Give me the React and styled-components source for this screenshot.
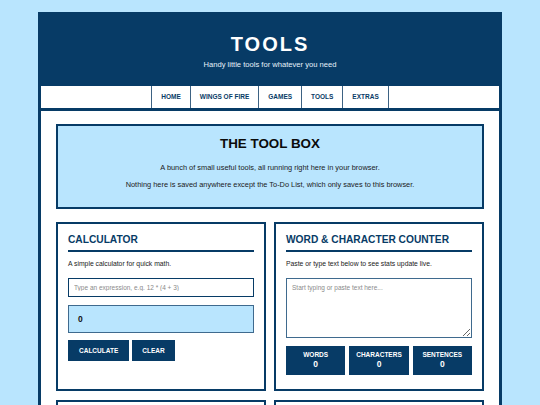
import React, { useState } from "react";
import styled, { createGlobalStyle } from "styled-components";

const navy = "#073b66";
const sky = "#b9e5fe";

const GlobalStyle = createGlobalStyle`
  * { box-sizing: border-box; }
  html, body {
    margin: 0;
    padding: 0;
    background: ${sky};
    font-family: "Liberation Sans", Arial, sans-serif;
  }
`;

const Page = styled.div`
  width: 464px;
  margin: 12px auto 0;
  border: 3px solid ${navy};
  border-bottom: none;
  background: #fff;
`;

const Header = styled.header`
  background: ${navy};
  color: #fff;
  text-align: center;
  padding: 17px 0 16px;
  h1 {
    margin: 0;
    font-size: 20px;
    line-height: 24px;
    letter-spacing: 2px;
    font-weight: 700;
  }
  p {
    margin: 4px 0 0;
    font-size: 7.6px;
    line-height: 10px;
    color: #e6f2fb;
  }
`;

const Nav = styled.nav`
  display: flex;
  justify-content: center;
  background: #fff;
  border-bottom: 3px solid ${navy};
`;

const NavItem = styled.a`
  display: block;
  padding: 0 9px;
  line-height: 22px;
  font-size: 6.5px;
  font-weight: 700;
  color: ${navy};
  text-decoration: none;
  border-left: 1px solid #3d6283;
  &:last-child {
    border-right: 1px solid #3d6283;
  }
`;

const Main = styled.main`
  padding: 13px 15px 0;
`;

const ToolBox = styled.section`
  background: ${sky};
  border: 2px solid ${navy};
  text-align: center;
  padding: 10px 10px 17px;
  margin-bottom: 13px;
  h2 {
    margin: 0 0 11px;
    font-size: 13.4px;
    line-height: 16px;
    color: #0b0b0b;
  }
  p {
    margin: 0;
    font-size: 7.4px;
    line-height: 10px;
    color: #1a1a1a;
  }
  p + p {
    margin-top: 7px;
  }
`;

const Grid = styled.div`
  display: grid;
  grid-template-columns: 1fr 1fr;
  gap: 9px 8px;
`;

const Card = styled.section`
  border: 2px solid ${navy};
  padding: 10px 10px 14px;
  background: #fff;
`;

const CardTitle = styled.h3`
  margin: 0;
  font-size: 10.2px;
  line-height: 12px;
  color: ${navy};
  padding-bottom: 4px;
  border-bottom: 2px solid ${navy};
`;

const Desc = styled.p`
  margin: 7px 0 10px;
  font-size: 6.8px;
  line-height: 9px;
  color: #1a1a1a;
`;

const Input = styled.input`
  display: block;
  width: 100%;
  height: 19px;
  border: 1.5px solid ${navy};
  padding: 0 5px;
  font-family: inherit;
  font-size: 6.5px;
  outline: none;
  &::placeholder {
    color: #8a8a8a;
  }
`;

const Result = styled.div`
  margin-top: 8px;
  height: 28px;
  background: ${sky};
  border: 1.5px solid #3f6a8e;
  padding: 0 9px;
  display: flex;
  align-items: center;
  font-size: 8.5px;
  font-weight: 700;
  color: #111;
`;

const Buttons = styled.div`
  display: flex;
  gap: 3px;
  margin-top: 7px;
`;

const Button = styled.button`
  height: 21px;
  padding: 0 ${(p) => p.$pad || 10}px;
  background: ${navy};
  color: #fff;
  border: none;
  font-family: inherit;
  font-size: 6.5px;
  font-weight: 700;
`;

const TextArea = styled.textarea`
  display: block;
  width: 100%;
  height: 60px;
  border: 1.5px solid #3f6a8e;
  padding: 5px 5px;
  font-family: inherit;
  font-size: 6.5px;
  resize: vertical;
  outline: none;
  &::placeholder {
    color: #8a8a8a;
  }
`;

const Stats = styled.div`
  display: grid;
  grid-template-columns: repeat(3, 1fr);
  gap: 4px;
  margin-top: 8px;
`;

const Stat = styled.div`
  height: 29px;
  background: ${navy};
  color: #fff;
  text-align: center;
  font-weight: 700;
  padding-top: 5px;
  span {
    display: block;
    font-size: 6.5px;
    line-height: 8px;
  }
  strong {
    display: block;
    font-size: 8.5px;
    line-height: 11px;
  }
`;

export default function App() {
  const [expr, setExpr] = useState("");
  const [result, setResult] = useState("0");
  const [text, setText] = useState("");

  const words = text.trim() ? text.trim().split(/\s+/).length : 0;
  const sentences = (text.match(/[.!?]+/g) || []).length;

  const calc = () => {
    try {
      if (!/^[\d\s+\-*/().]*$/.test(expr)) return setResult("Error");
      // eslint-disable-next-line no-new-func
      setResult(String(Function(`return (${expr || 0})`)()));
    } catch (e) {
      setResult("Error");
    }
  };

  return (
    <>
      <GlobalStyle />
      <Page>
        <Header>
          <h1>TOOLS</h1>
          <p>Handy little tools for whatever you need</p>
        </Header>
        <Nav>
          <NavItem href="#">HOME</NavItem>
          <NavItem href="#">WINGS OF FIRE</NavItem>
          <NavItem href="#">GAMES</NavItem>
          <NavItem href="#">TOOLS</NavItem>
          <NavItem href="#">EXTRAS</NavItem>
        </Nav>
        <Main>
          <ToolBox>
            <h2>THE TOOL BOX</h2>
            <p>A bunch of small useful tools, all running right here in your browser.</p>
            <p>Nothing here is saved anywhere except the To-Do List, which only saves to this browser.</p>
          </ToolBox>
          <Grid>
            <Card>
              <CardTitle>CALCULATOR</CardTitle>
              <Desc>A simple calculator for quick math.</Desc>
              <Input
                value={expr}
                onChange={(e) => setExpr(e.target.value)}
                placeholder="Type an expression, e.g. 12 * (4 + 3)"
              />
              <Result>{result}</Result>
              <Buttons>
                <Button $pad={11} onClick={calc}>CALCULATE</Button>
                <Button $pad={10} onClick={() => { setExpr(""); setResult("0"); }}>CLEAR</Button>
              </Buttons>
            </Card>
            <Card>
              <CardTitle>WORD &amp; CHARACTER COUNTER</CardTitle>
              <Desc>Paste or type text below to see stats update live.</Desc>
              <TextArea
                value={text}
                onChange={(e) => setText(e.target.value)}
                placeholder="Start typing or paste text here..."
              />
              <Stats>
                <Stat><span>WORDS</span><strong>{words}</strong></Stat>
                <Stat><span>CHARACTERS</span><strong>{text.length}</strong></Stat>
                <Stat><span>SENTENCES</span><strong>{sentences}</strong></Stat>
              </Stats>
            </Card>
            <Card>
              <CardTitle>TO-DO LIST</CardTitle>
              <Desc>Keep track of things you need to do.</Desc>
            </Card>
            <Card>
              <CardTitle>UNIT CONVERTER</CardTitle>
              <Desc>Convert between common units.</Desc>
            </Card>
          </Grid>
        </Main>
      </Page>
    </>
  );
}
